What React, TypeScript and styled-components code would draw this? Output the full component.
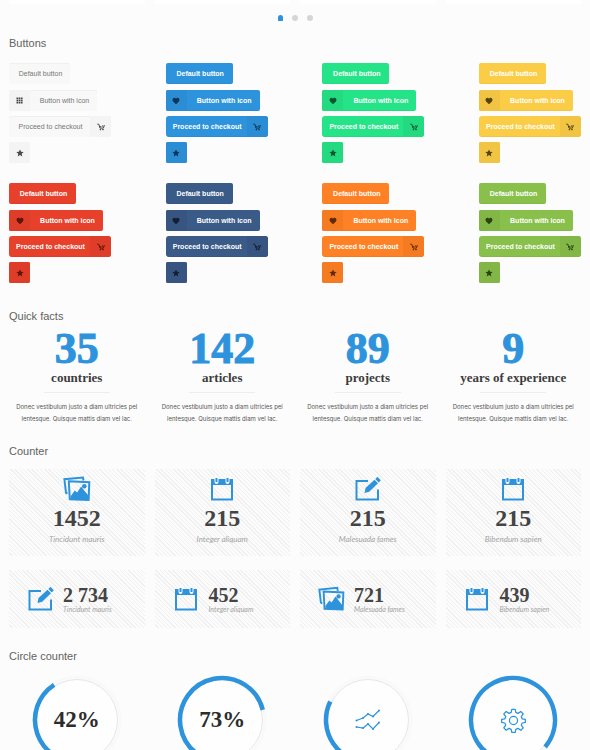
import React from "react";
import styled, { createGlobalStyle, css } from "styled-components";

const GlobalStyle = createGlobalStyle`
  * { box-sizing: border-box; }
  body {
    margin: 0;
    background: #fcfcfc;
    color: #626262;
    font-family: "Liberation Sans", Arial, sans-serif;
  }
`;

const slab = css`
  font-family: "Liberation Serif", "Times New Roman", serif;
  font-weight: 700;
`;

const Page = styled.main`
  padding: 0 9px 24px;
`;

const Columns = styled.div`
  display: grid;
  grid-template-columns: repeat(4, 1fr);
  column-gap: 10px;
`;

const PanelEdge = styled.div`
  height: 4px;
  background: #fff;
`;

const Pager = styled.nav`
  display: flex;
  justify-content: center;
  align-items: center;
  gap: 9px;
  height: 28px;
`;

const PagerDot = styled.button<{ $active?: boolean }>`
  width: ${(p) => (p.$active ? 5 : 6)}px;
  height: 6px;
  padding: 0;
  border: 0;
  border-radius: ${(p) => (p.$active ? "3px 3px 1px 1px" : "50%")};
  background: ${(p) => (p.$active ? "#2c93dc" : "#d6d6d6")};
`;

const Heading = styled.h2<{ $top?: number }>`
  margin: ${(p) => p.$top ?? 0}px 0 0;
  font-size: 11px;
  line-height: 14px;
  font-weight: 400;
  color: #626262;
`;

const Palette = styled.div`
  display: grid;
  grid-template-columns: repeat(4, 102px);
  justify-content: space-between;
  row-gap: 20px;
  margin-top: 13px;
`;

const ButtonStack = styled.div`
  display: grid;
  grid-template-rows: 22px 21px 21px 21px;
  row-gap: 5px;
  justify-items: start;
  align-items: start;
`;

type Tone = { fill: string; side: string; icon: string; plain?: boolean };

const Btn = styled.button<{ $tone: Tone; $width: number; $radius?: number }>`
  display: flex;
  align-items: stretch;
  width: ${(p) => p.$width}px;
  height: 21px;
  padding: 0;
  overflow: hidden;
  border: 0;
  border-radius: ${(p) => p.$radius ?? 2}px;
  background: ${(p) => p.$tone.fill};
  box-shadow: ${(p) => (p.$tone.plain ? "inset 0 1px 0 #f0f0f0" : "inset 0 -1px 0 rgba(0, 0, 0, 0.04)")};
  color: ${(p) => (p.$tone.plain ? "#777" : "#fff")};
  font-family: inherit;
  font-size: 7px;
  line-height: 21px;
  font-weight: ${(p) => (p.$tone.plain ? 400 : 700)};
  white-space: nowrap;
`;

const BtnLabel = styled.span`
  flex: 1;
  padding-left: 2px;
  text-align: center;
`;

const BtnIcon = styled.span<{ $tone: Tone }>`
  display: flex;
  align-items: center;
  justify-content: center;
  width: 21px;
  background: ${(p) => p.$tone.side};
  color: ${(p) => p.$tone.icon};
`;

const tones: Tone[] = [
  { fill: "#f8f8f8", side: "#f4f4f4", icon: "#4a4a4a", plain: true },
  { fill: "#2c93dc", side: "#2b8dd3", icon: "#0d3557" },
  { fill: "#25e487", side: "#24da81", icon: "#0c5531" },
  { fill: "#fbcd46", side: "#f1c543", icon: "#54430f" },
  { fill: "#e8412b", side: "#de3e29", icon: "#611409" },
  { fill: "#3a5a88", side: "#375580", icon: "#101f33" },
  { fill: "#ff8125", side: "#f57b22", icon: "#5e2b06" },
  { fill: "#89c04c", side: "#82b748", icon: "#2b4312" },
];

const GridIcon = () => (
  <svg width="7" height="7" viewBox="0 0 7 7" fill="currentColor">
    <path d="M.5.5h1.7v1.7H.5zM2.7.5h1.7v1.7H2.7zM4.9.5h1.7v1.7H4.9zM.5 2.7h1.7v1.7H.5zM2.7 2.7h1.7v1.7H2.7zM4.9 2.7h1.7v1.7H4.9zM.5 4.9h1.7v1.7H.5zM2.7 4.9h1.7v1.7H2.7zM4.9 4.9h1.7v1.7H4.9z" />
  </svg>
);

const HeartIcon = () => (
  <svg width="8" height="8" viewBox="0 0 8 8" fill="currentColor">
    <path d="M4 7.2 1.1 4.4C-.3 2.6 1.1.8 2.4.8 3.2.8 3.8 1.300 4 1.800 4.2 1.300 4.8.8 5.6.8 6.900.8 8.300 2.600 6.900 4.400Z" />
  </svg>
);

const CartIcon = () => (
  <svg width="8" height="8" viewBox="0 0 8 8" fill="none" stroke="currentColor" strokeWidth="1">
    <path d="M.3 1.200h1.500L3 5.100h3.400l1-3M2.400 3.600h2M5.700 2.300v1.400" />
    <circle cx="3.300" cy="6.700" r=".4" fill="currentColor" />
    <circle cx="6" cy="6.700" r=".4" fill="currentColor" />
  </svg>
);

const StarIcon = () => (
  <svg width="8" height="8" viewBox="0 0 8 8" fill="currentColor">
    <path d="m4 .4 1.100 2.400 2.600.2-2 1.800.6 2.600L4 6.100 1.700 7.400l.6-2.600L.3 3l2.600-.2z" />
  </svg>
);

function ButtonSet({ tone }: { tone: Tone }) {
  return (
    <ButtonStack>
      <Btn $tone={tone} $width={tone.plain ? 61 : 67}>
        <BtnLabel>Default button</BtnLabel>
      </Btn>
      <Btn $tone={tone} $width={tone.plain ? 88 : 94}>
        <BtnIcon $tone={tone}>{tone.plain ? <GridIcon /> : <HeartIcon />}</BtnIcon>
        <BtnLabel>Button with icon</BtnLabel>
      </Btn>
      <Btn $tone={tone} $width={102} $radius={tone.plain ? 2 : 3}>
        <BtnLabel>Proceed to checkout</BtnLabel>
        <BtnIcon $tone={tone}>
          <CartIcon />
        </BtnIcon>
      </Btn>
      <Btn $tone={tone} $width={21} aria-label="Favourite">
        <BtnIcon $tone={tone}>
          <StarIcon />
        </BtnIcon>
      </Btn>
    </ButtonStack>
  );
}

const Fact = styled.article`
  display: flex;
  flex-direction: column;
  align-items: center;
  padding-top: 5px;
  text-align: center;
`;

const FactNumber = styled.strong`
  ${slab}
  font-size: 44px;
  line-height: 42px;
  color: #2c93dc;
  -webkit-text-stroke: 1px currentColor;
`;

const FactName = styled.h3`
  ${slab}
  margin: 0;
  font-size: 13px;
  line-height: 16px;
  color: #3c3c3c;
  white-space: nowrap;
`;

const Rule = styled.hr`
  width: 66px;
  height: 1px;
  margin: 6px 0 8px;
  border: 0;
  background: #ededed;
`;

const FactText = styled.p`
  margin: 0;
  font-family: Inter, "Liberation Sans", sans-serif;
  font-size: 6px;
  line-height: 12px;
  color: #555;
  white-space: nowrap;
`;

const facts = [
  ["35", "countries"],
  ["142", "articles"],
  ["89", "projects"],
  ["9", "years of experience"],
];

const Card = styled.article<{ $row?: boolean }>`
  display: flex;
  flex-direction: ${(p) => (p.$row ? "row" : "column")};
  align-items: center;
  gap: ${(p) => (p.$row ? 9 : 0)}px;
  min-height: ${(p) => (p.$row ? 58 : 87)}px;
  padding: ${(p) => (p.$row ? "0 18px" : "7px 0 0")};
  color: #2c93dc;
  background: repeating-linear-gradient(45deg, #fcfcfc 0 2px, #f0f0f0 2px 3px);
`;

const CardIcon = styled.span`
  display: flex;
  justify-content: center;
  width: 27px;
`;

const CardRow = styled(Columns)<{ $top: number }>`
  margin-top: ${(p) => p.$top}px;
`;

const CardNumber = styled.strong<{ $small?: boolean }>`
  ${slab}
  display: block;
  font-size: ${(p) => (p.$small ? 20 : 24)}px;
  line-height: ${(p) => (p.$small ? 20 : 32)}px;
  color: #444;
`;

const CardLabel = styled.span<{ $small?: boolean }>`
  display: block;
  font-family: Lato, sans-serif;
  font-style: italic;
  font-size: ${(p) => (p.$small ? 7 : 8)}px;
  line-height: ${(p) => (p.$small ? 8 : 10)}px;
  color: #a4a4a4;
  white-space: nowrap;
`;

const PhotosIcon = () => (
  <svg width="28" height="26" viewBox="0 0 28 26" fill="none" stroke="currentColor" strokeWidth="2">
    <path d="M4.500 17.500 3 16.800 1.400 3.200 20 1.500l.5 3" />
    <path d="m5.800 5.300 20.500.9-.7 17.800-18.800-.8z" />
    <path d="m7.500 20.500 4.300-6 2.300 2 4-6 7 8.700-.1 4.800-17-.7z" fill="currentColor" stroke="none" />
    <circle cx="21.300" cy="10.300" r="2.300" fill="currentColor" stroke="none" />
  </svg>
);

const CalendarIcon = () => (
  <svg width="24" height="26" viewBox="0 0 24 26" fill="none" stroke="currentColor">
    <path d="M2 4h20v19.500H2z" strokeWidth="2" />
    <path d="M2 3h20v6H2z" fill="currentColor" stroke="none" />
    <path d="M6.500 1v5M17.500 1v5" stroke="#fafafa" strokeWidth="4" strokeLinecap="round" />
    <path d="M6.500 2v4M17.500 2v4" strokeWidth="2" />
  </svg>
);

const EditIcon = () => (
  <svg width="26" height="26" viewBox="0 0 26 26" fill="none" stroke="currentColor">
    <path d="M13 5H1.500v18.500h21.500V13.500" strokeWidth="2" />
    <path d="m9.500 17 1-5 9-8.300 3.500 3.600-8.800 8.500z" fill="currentColor" stroke="none" />
    <path d="m20.400 3 2-2.200 3.400 3.400-2.100 2.200z" fill="currentColor" stroke="none" />
  </svg>
);

const icons = { photos: PhotosIcon, calendar: CalendarIcon, edit: EditIcon };
type IconName = keyof typeof icons;
const counters: [IconName, string, string][] = [
  ["photos", "1452", "Tincidunt mauris"],
  ["calendar", "215", "Integer aliquam"],
  ["edit", "215", "Malesuada fames"],
  ["calendar", "215", "Bibendum sapien"],
];
const smallCounters: [IconName, string, string][] = [
  ["edit", "2 734", "Tincidunt mauris"],
  ["calendar", "452", "Integer aliquam"],
  ["photos", "721", "Malesuada fames"],
  ["calendar", "439", "Bibendum sapien"],
];

const Dial = styled.div`
  display: grid;
  place-items: center;
  margin-top: 11px;
  color: #2c93dc;

  > * {
    grid-area: 1 / 1;
  }
`;

const DialValue = styled.strong`
  ${slab}
  font-size: 23px;
  line-height: 28px;
  color: #2c2c2c;
`;

function Ring({ end }: { end: number }) {
  const start = 175;
  const point = (deg: number) => {
    const a = (deg * Math.PI) / 180;
    return `${46 + 42 * Math.sin(a)} ${46 - 42 * Math.cos(a)}`;
  };
  const large = end - start > 180 ? 1 : 0;
  return (
    <svg width="92" height="92" viewBox="0 0 92 92" fill="none">
      <circle cx="46" cy="46" r="43" stroke="#f9f9f9" strokeWidth="3" />
      <circle cx="46" cy="46" r="40.500" fill="#fefefe" stroke="#e6e6e6" />
      <path d={`M${point(start)}A42 42 0 ${large} 1 ${point(end)}`} stroke="#2c93dc" strokeWidth="4.500" />
    </svg>
  );
}

const TrendIcon = () => (
  <svg width="26" height="22" viewBox="0 0 26 22" fill="none" stroke="currentColor" strokeWidth="1.200">
    <path d="m1.500 11.500 6.500-2.500 5-4 5 2.500 6-6M1.500 18l6.500 1 5-4 5 5 6-6.500" />
    <path
      d="M1.500 11.500h0M8 9h0M13 5h0M18 7.500h0M24 1.500h0M1.500 18h0M8 19h0M13 15h0M18 20h0M24 13.500h0"
      strokeWidth="2"
      strokeLinecap="round"
    />
  </svg>
);

const GearIcon = () => (
  <svg width="25" height="25" viewBox="-13 -13 26 26" fill="none" stroke="currentColor" strokeWidth="1.300" strokeLinejoin="round">
    <path d="M-1.800-11.700h3.600l.6 3.300 2.300 1 2.900-2 2.500 2.500-2 2.900.9 2.200 3.300.6v3.200l-3.300.6-.9 2.200 2 2.900-2.500 2.500-2.900-2-2.300 1-.6 3.200h-3.600l-.6-3.200-2.300-1-2.900 2-2.500-2.500 2-2.900-.9-2.200-3.300-.6v-3.200l3.300-.6.9-2.200-2-2.900 2.500-2.500 2.900 2 2.300-1z" />
    <circle r="4.200" />
  </svg>
);

export default function App() {
  return (
    <Page>
      <GlobalStyle />
      <Columns>
        {facts.map(([, name]) => (
          <PanelEdge key={name} />
        ))}
      </Columns>
      <Pager aria-label="Slides">
        <PagerDot $active aria-label="Slide 1" />
        <PagerDot aria-label="Slide 2" />
        <PagerDot aria-label="Slide 3" />
      </Pager>

      <Heading $top={4}>Buttons</Heading>
      <Palette>
        {tones.map((tone) => (
          <ButtonSet key={tone.fill} tone={tone} />
        ))}
      </Palette>

      <Heading $top={26}>Quick facts</Heading>
      <Columns>
        {facts.map(([value, name]) => (
          <Fact key={name}>
            <FactNumber>{value}</FactNumber>
            <FactName>{name}</FactName>
            <Rule />
            <FactText>
              Donec vestibulum justo a diam ultricies pel
              <br />
              lentesque. Quisque mattis diam vel lac.
            </FactText>
          </Fact>
        ))}
      </Columns>

      <Heading $top={19}>Counter</Heading>
      <CardRow $top={11}>
        {counters.map(([icon, value, label]) => {
          const Icon = icons[icon];
          return (
            <Card key={label}>
              <Icon />
              <CardNumber>{value}</CardNumber>
              <CardLabel>{label}</CardLabel>
            </Card>
          );
        })}
      </CardRow>
      <CardRow $top={14}>
        {smallCounters.map(([icon, value, label]) => {
          const Icon = icons[icon];
          return (
            <Card key={label} $row>
              <CardIcon>
                <Icon />
              </CardIcon>
              <div>
                <CardNumber $small>{value}</CardNumber>
                <CardLabel $small>{label}</CardLabel>
              </div>
            </Card>
          );
        })}
      </CardRow>

      <Heading $top={21}>Circle counter</Heading>
      <Columns>
        <Dial>
          <Ring end={327} />
          <DialValue>42%</DialValue>
        </Dial>
        <Dial>
          <Ring end={436} />
          <DialValue>73%</DialValue>
        </Dial>
        <Dial>
          <Ring end={296} />
          <TrendIcon />
        </Dial>
        <Dial>
          <Ring end={490} />
          <GearIcon />
        </Dial>
      </Columns>
    </Page>
  );
}
